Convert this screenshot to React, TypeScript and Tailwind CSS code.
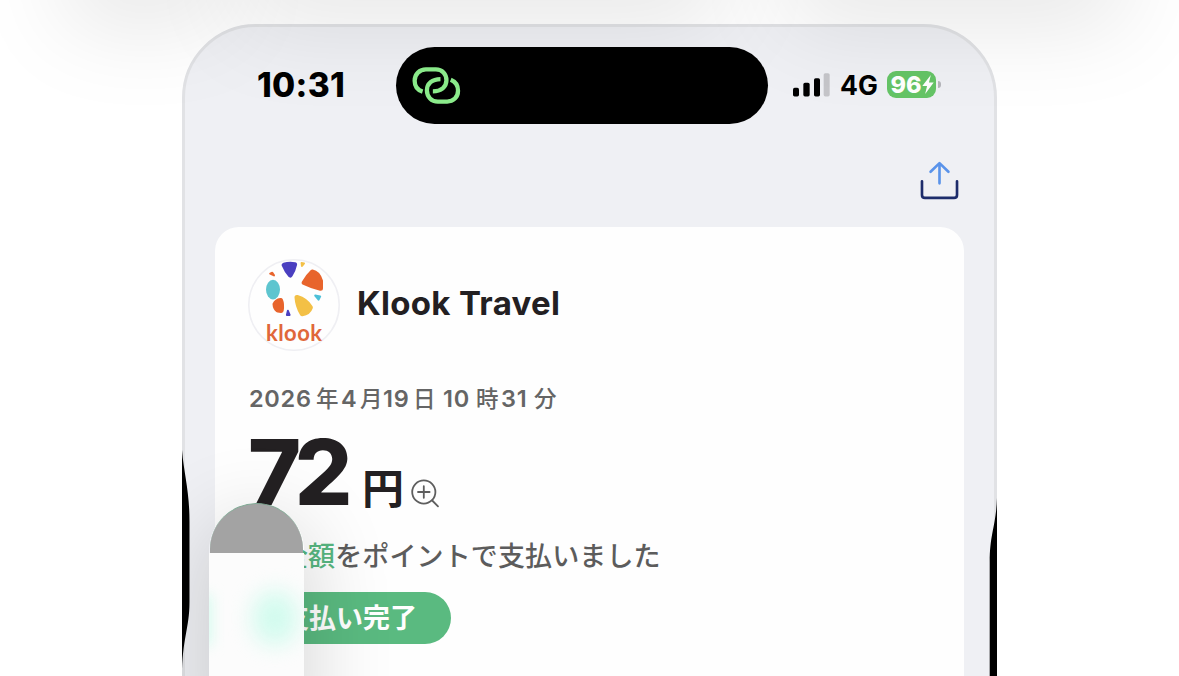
import React from 'react'

const LinkIcon = () => (
  <svg viewBox="66 78 148 114" className="h-[38px] w-[49px]" fill="none" stroke="#8cec8c" strokeWidth={13}>
    <path d="M98 152C82 147 74 134 74 119C74 99 89 85 108 85H138C157 85 170 99 170 118C170 138 154 151 129 151" />
    <path d="M152 114C127 114 111 128 111 148C111 168 125 182 144 182H172C191 182 205 169 205 149C205 135 198 122 183 116" />
  </svg>
)

const SignalBars = () => (
  <svg viewBox="36 69 114 74" className="h-[25px] w-[38px]">
    <rect x={39} y={113} width={18} height={26} rx={5} />
    <rect x={70} y={98} width={19} height={41} rx={5} />
    <rect x={102} y={84} width={18} height={55} rx={5} />
    <rect x={131} y={69} width={18} height={70} rx={5} fill="#c5c5c9" />
  </svg>
)

const Battery = () => (
  <div className="-mt-0.5 flex items-center gap-0.5">
    <div className="flex h-[27px] w-[49px] items-center rounded-[9px] bg-[#65c466] pl-[3.5px]">
      <span className="text-[23.5px] leading-none font-extrabold text-white">96</span>
      <svg viewBox="0 0 12 20" className="h-[19px] w-[12px]" fill="white">
        <path d="M9 0L0 11.5H5L3 20L12 8H7Z" />
      </svg>
    </div>
    <div className="h-[7px] w-[3px] rounded-r-full bg-[#b5b5ba]" />
  </div>
)

const ShareIcon = () => (
  <svg viewBox="418 332 118 117" className="h-[39px] w-[39px]" fill="none" strokeWidth={8} strokeLinecap="round" strokeLinejoin="round">
    <path d="M424 393V434Q424 443 433 443H521Q530 443 530 434V393" stroke="#1d2c6b" />
    <path d="M477 399V339M450 364L477 338L504 364" stroke="#5a93ea" />
  </svg>
)

const KlookLogo = () => (
  <svg viewBox="0 0 92 92" className="size-[92px]">
    <circle cx={46} cy={46} r={45.2} fill="#fefefe" stroke="#efeff3" strokeWidth={1.6} />
    <g strokeLinejoin="round" strokeWidth={5}>
      <path d="M36.2 6.2Q41 4.6 46.6 5.6Q45.5 11 42.3 16Q38.5 12 36.2 6.2Z" fill="#4a3fc0" stroke="#4a3fc0" />
      <path d="M64.3 13Q70 14 72.5 22V29.2Q64 27.5 56.2 23.6Q59.5 17.5 64.3 13Z" fill="#e8642c" stroke="#e8642c" />
      <path d="M49 38.4Q58 41 62.4 48.5Q60.5 54 54.2 54.8Q49.5 47 49 38.4Z" fill="#f3c046" stroke="#f3c046" />
      <path d="M27 45.2Q28.5 42 32.6 41.4Q34.2 45 33.2 51.4L29.8 51Q27.2 49 27 45.2Z" fill="#e8642c" stroke="#e8642c" />
    </g>
    <ellipse cx={25} cy={30.6} rx={7} ry={9.8} fill="#5ec5cf" />
    <g strokeLinejoin="round" strokeWidth={2}>
      <path d="M53.6 4L56 4.4L54 7Z" fill="#f3c046" stroke="#f3c046" />
      <path d="M22.2 14.6L24.3 13.8L26 16.4Z" fill="#e8642c" stroke="#e8642c" />
      <path d="M67.2 36.5L72.2 37.4L70.6 40.6Z" fill="#4cc0d8" stroke="#4cc0d8" />
      <path d="M39.9 51.8L41.6 56H38.9Z" fill="#4a3fc0" stroke="#4a3fc0" />
    </g>
    <text x={18} y={81.5} textLength={56} className="fill-[#e0673a] font-['Lato'] text-[22px] font-bold">
      klook
    </text>
  </svg>
)

const ZoomInIcon = () => (
  <svg viewBox="0 0 30 30" className="size-[30px]" fill="none" stroke="#5e5e5e" strokeWidth={1.8} strokeLinecap="round">
    <circle cx={12.8} cy={13} r={11.6} />
    <path d="M21.2 21.5L27 27.4M7 13H18.6M12.8 7.2V18.8" />
  </svg>
)

const StatusBar = () => (
  <div className="flex h-[77px] items-center pl-[72px]">
    <span className="w-[139px] text-[33.5px] leading-none font-extrabold tracking-[0.3px] text-black">10:31</span>
    <div className="flex h-[77px] w-[372px] items-center rounded-full bg-black pl-4">
      <LinkIcon />
    </div>
    <div className="ml-6 flex items-center">
      <SignalBars />
      <span className="ml-2.5 w-[47px] text-[26.5px] leading-none font-bold text-black">4G</span>
      <Battery />
    </div>
  </div>
)

const ReceiptCard = () => (
  <div className="ml-[30px] h-[520px] w-[749px] rounded-[24px] bg-[#fefefe] px-[33px] pt-8">
    <div className="flex items-center">
      <KlookLogo />
      <h1 className="-mt-1 ml-[17px] text-[33px] leading-10 font-bold tracking-[0.3px] text-[#232022]">Klook Travel</h1>
    </div>
    <p className="mt-8 flex h-8 items-center pl-px text-[23.5px] leading-8 font-semibold tracking-[0.7px] text-[#656565]">
      <span className="w-[67px]">2026</span>
      <span className="w-[25px] text-[22.5px] font-medium">年</span>
      <span className="w-[19px]">4</span>
      <span className="w-[23px] text-[22.5px] font-medium">月</span>
      <span className="w-[30px]">19</span>
      <span className="w-[30px] text-[22.5px] font-medium">日</span>
      <span className="w-[33px]">10</span>
      <span className="w-[25px] text-[22.5px] font-medium">時</span>
      <span className="w-[33px]">31</span>
      <span className="text-[22.5px] font-medium">分</span>
    </p>
    <div className="mt-[23px] flex h-[70px] items-end text-[#232022]">
      <span className="w-[114px] text-[90.5px] leading-[72px] font-extrabold tracking-[-6.5px]">72</span>
      <span className="relative top-0.5 text-[42px] leading-[42px] font-bold">円</span>
      <span className="relative top-px ml-[7px]">
        <ZoomInIcon />
      </span>
    </div>
    <p className="mt-[29px] pt-px pl-[33px] text-[27px] leading-[38px] font-medium tracking-[0.12px] text-[#5c5c5c]">
      <span className="text-[#57b680]">全額</span>をポイントで支払いました
    </p>
    <div className="mt-4 flex h-[52px] w-[203px] items-center rounded-full bg-[#5aba80] pt-0.5 pl-[34px] text-[27px] font-bold text-white">
      支払い完了
    </div>
  </div>
)

export default function App() {
  return (
    <div className="relative h-[676px] w-[1179px] overflow-hidden bg-white font-['Inter','Noto_Sans_CJK_JP',sans-serif]">
      <div className="mt-6 ml-[182px] h-[700px] w-[815px] rounded-t-[74px] border-[3px] border-[#e1e2e5] bg-[#eff0f4] pt-5">
        <StatusBar />
        <div className="mt-[37px] mb-[27px] flex h-[39px] justify-end pr-[35.5px]">
          <ShareIcon />
        </div>
        <ReceiptCard />
      </div>

      {/* soft shadows coming from above the page */}
      <div className="absolute -top-[70px] left-[90px] h-[50px] w-[110px] shadow-[0_20px_95px_25px_rgba(0,0,0,0.10)]" />
      <div className="absolute -top-[70px] left-[265px] h-[50px] w-[435px] shadow-[0_20px_95px_25px_rgba(0,0,0,0.10)]" />
      <div className="absolute -top-[70px] left-[810px] h-[50px] w-[290px] shadow-[0_20px_95px_25px_rgba(0,0,0,0.10)]" />

      {/* floating pill, its shadow stays inside the phone */}
      <div className="absolute top-[380px] left-[182px] h-[296px] w-[815px] overflow-hidden">
        <div className="mt-[123px] ml-[27px] h-[240px] w-[95px] rounded-t-full shadow-[0_20px_85px_5px_rgba(0,0,0,0.16)]">
          <div className="ml-px h-[50px] w-[93px] rounded-t-full border-t border-[#7faa94] bg-[#a3a3a3]" />
          <div className="relative h-[190px] overflow-hidden bg-[#fcfcfc]">
            <div className="absolute top-[38px] left-[44px] h-[54px] w-[44px] rounded-3xl bg-[#d2fbee] blur-[11px]" />
            <div className="absolute top-[42px] -left-[12px] h-[50px] w-[14px] bg-[#d2fbee] blur-[7px]" />
          </div>
        </div>
      </div>

      {/* side bezels */}
      <svg viewBox="0 0 8 226" className="absolute top-[450px] left-[182px] h-[226px] w-2">
        <path d="M0 0C2 25 7.5 40 7.5 72V152C7.5 178 0 190 0 226Z" />
      </svg>
      <svg viewBox="0 0 8 178" className="absolute top-[498px] left-[989px] h-[178px] w-2">
        <path d="M8 0C7 28 .7 36 .7 64V178H8Z" />
      </svg>
    </div>
  )
}
